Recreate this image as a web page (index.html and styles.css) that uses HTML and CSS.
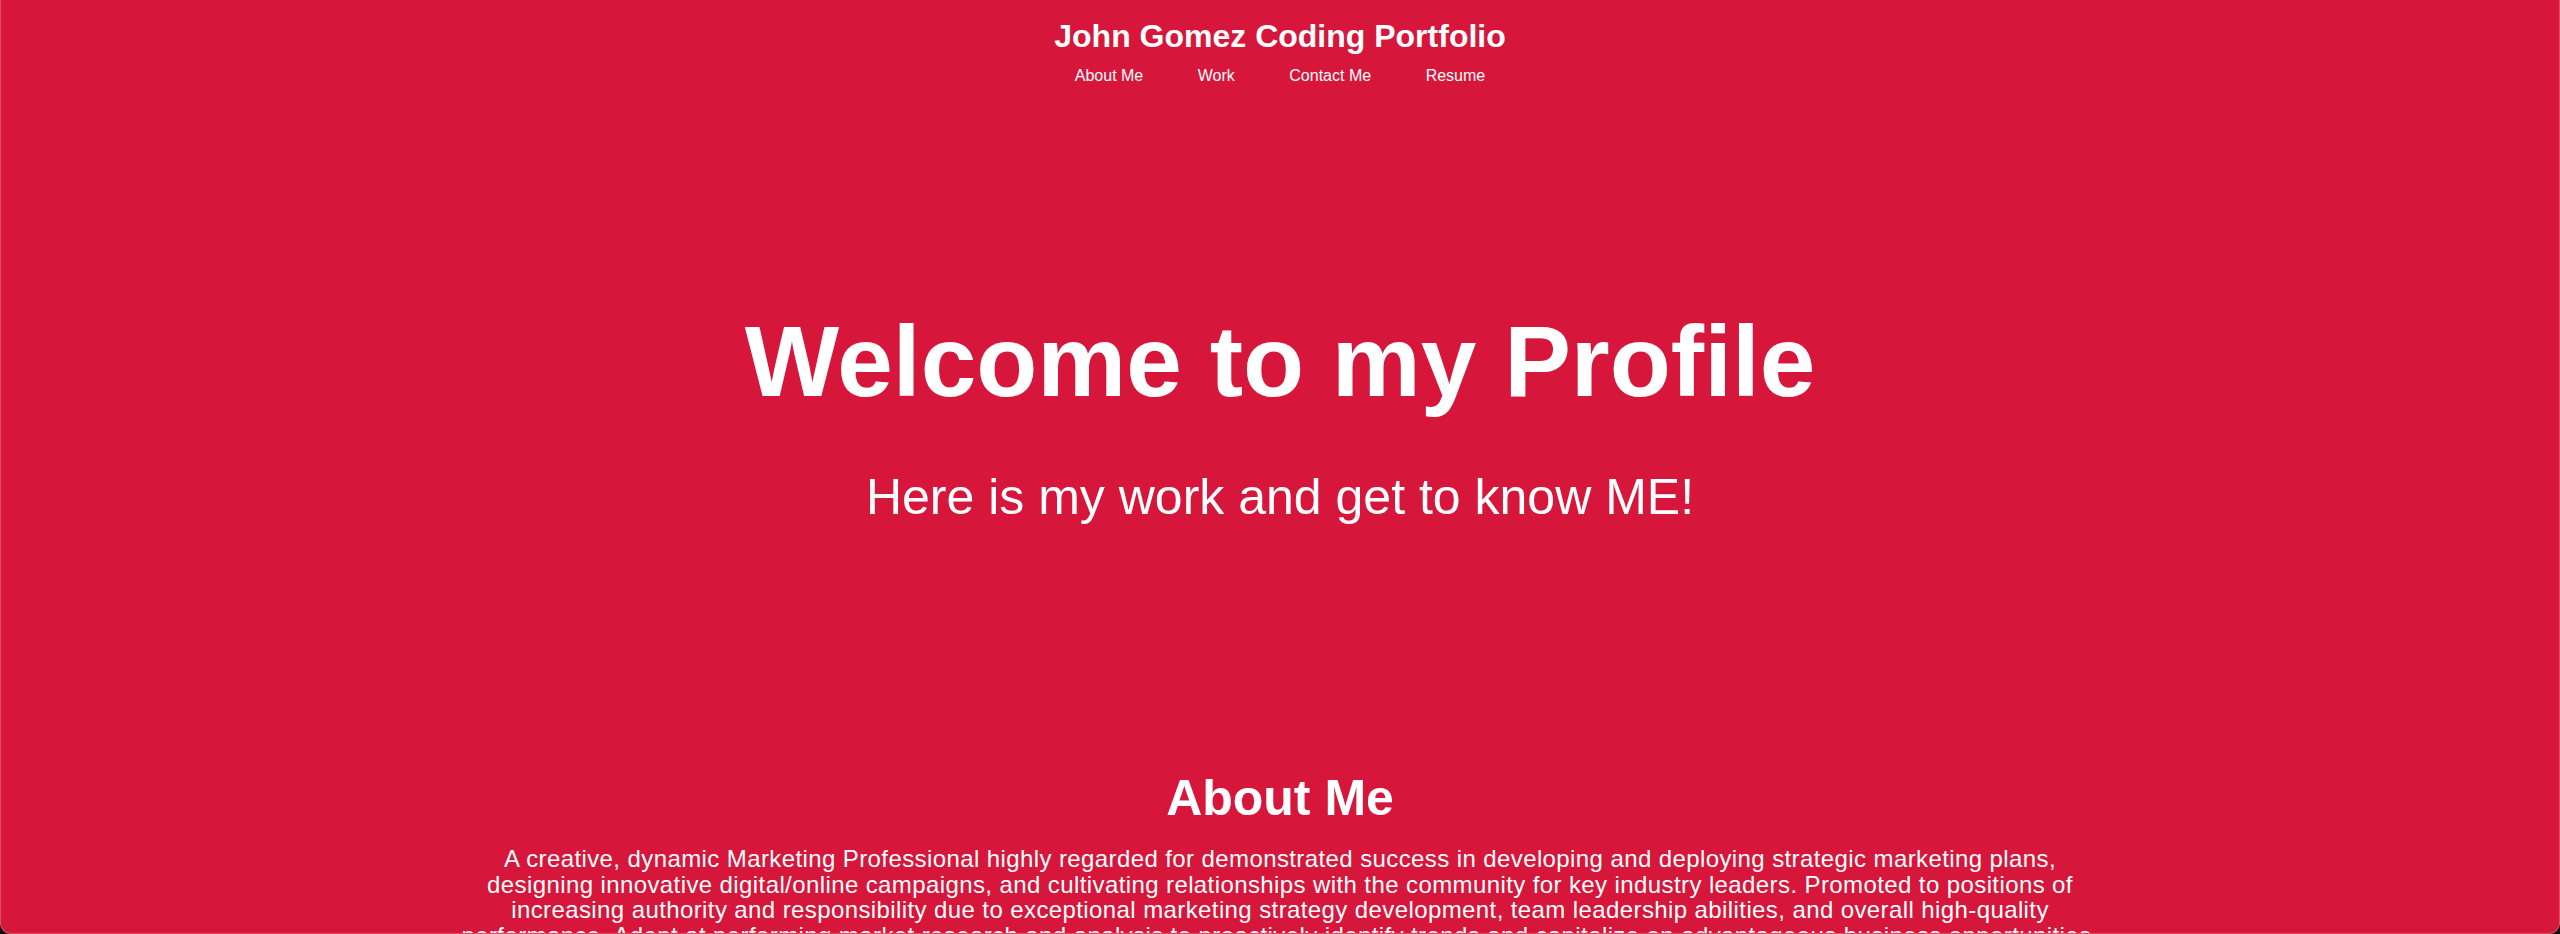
FILE: index.html
```html
<!DOCTYPE html>
<html lang="en">
<head>
<meta charset="utf-8">
<title>John Gomez Coding Portfolio</title>
<link rel="stylesheet" href="styles.css">
</head>
<body>
<div class="window">
  <header class="site-header">
    <h1 class="site-title">John Gomez Coding Portfolio</h1>
    <nav class="site-nav">
      <a href="#about">About Me</a>
      <a href="#work">Work</a>
      <a href="#contact">Contact Me</a>
      <a href="#resume">Resume</a>
    </nav>
  </header>
  <section class="hero">
    <h2 class="hero-title">Welcome to my Profile</h2>
    <p class="hero-sub">Here is my work and get to know ME!</p>
  </section>
  <section class="about" id="about">
    <h2 class="about-title">About Me</h2>
    <p class="about-text">A creative, dynamic Marketing Professional highly regarded for demonstrated success in developing and deploying strategic marketing plans, designing innovative digital/online campaigns, and cultivating relationships with the community for key industry leaders. Promoted to positions of increasing authority and responsibility due to exceptional marketing strategy development, team leadership abilities, and overall high-quality performance. Adept at performing market research and analysis to proactively identify trends and capitalize on advantageous business opportunities.</p>
  </section>
</div>
</body>
</html>
```
FILE: styles.css
```css
html {
  background: #111;
}
body {
  margin: 0;
  font-family: "Liberation Sans", Arial, sans-serif;
  color: #fff;
}
.window {
  height: 934px;
  box-sizing: border-box;
  overflow: hidden;
  background: #d6163a;
  border-radius: 0 0 11px 11px;
  border: 1px solid #e04a63;
  border-top: 0;
  text-align: center;
}
.site-header {
  padding-top: 18px;
}
.site-title {
  margin: 0;
  font-size: 32px;
  font-weight: bold;
}
.site-nav {
  margin-top: 11.5px;
  display: flex;
  justify-content: center;
  gap: 54.5px;
  font-size: 16px;
}
.site-nav a {
  color: #fff;
  text-decoration: none;
}
.hero {
  padding-top: 219px;
  padding-bottom: 243.5px;
}
.hero-title {
  margin: 0;
  font-size: 100px;
  font-weight: bold;
}
.hero-sub {
  margin: 49px 0 0;
  font-size: 50px;
}
.about-title {
  margin: 0;
  font-size: 50px;
  font-weight: bold;
}
.about-text {
  margin: 19px auto 0;
  width: 1654px;
  font-size: 24px;
  line-height: 25.5px;
  letter-spacing: 0.4px;
}
```
